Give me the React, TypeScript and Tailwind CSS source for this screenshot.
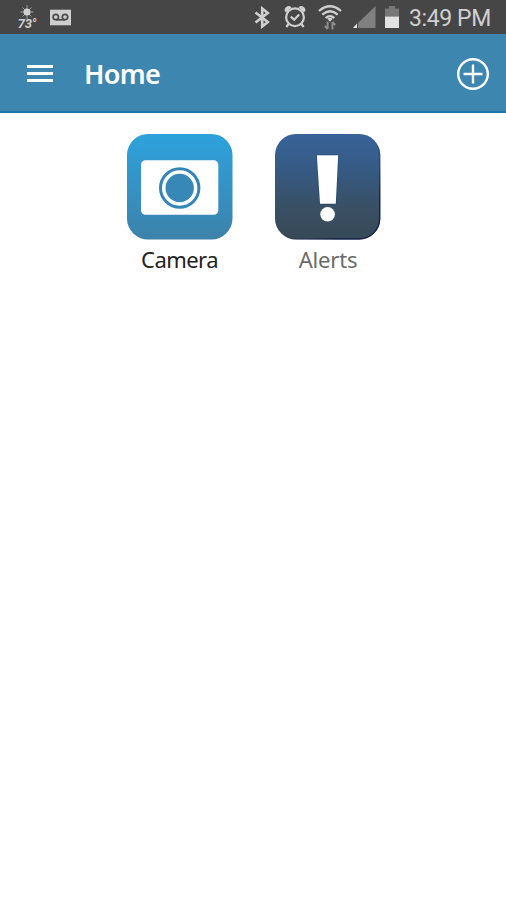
import type { ReactNode } from "react"

type tileProps = {
    label: string
    labelClass: string
    children: ReactNode
}

function Tile({ label, labelClass, children }: tileProps) {
    return (
        <button className="flex w-[106px] flex-col items-center">
            {children}
            <span className={`mt-[3px] whitespace-nowrap text-[22px] leading-[32px] ${labelClass}`}>{label}</span>
        </button>
    )
}

function CameraIcon() {
    return (
        <svg className="h-[106px] w-[106px]" viewBox="0 0 106 106">
            <defs>
                <linearGradient id="camera" x1="0" y1="0" x2="0" y2="1">
                    <stop offset="0" stopColor="#2da2dc" />
                    <stop offset="0.5" stopColor="#3592c5" />
                    <stop offset="1" stopColor="#3d82aa" />
                </linearGradient>
            </defs>
            <rect width="105.5" height="105.5" rx="21" fill="url(#camera)" />
            <rect x="14" y="26.3" width="77.3" height="54.5" rx="4.5" fill="#fff" />
            <circle cx="52.7" cy="54" r="19.2" fill="none" stroke="#3387b6" strokeWidth="3" />
            <circle cx="52.7" cy="54" r="14.2" fill="#3788b6" />
        </svg>
    )
}

function AlertsIcon() {
    return (
        <svg className="h-[106px] w-[106px]" viewBox="0 0 106 106">
            <defs>
                <linearGradient id="alerts" x1="0" y1="0" x2="0" y2="1">
                    <stop offset="0" stopColor="#386399" />
                    <stop offset="0.35" stopColor="#365a83" />
                    <stop offset="0.7" stopColor="#394f63" />
                    <stop offset="1" stopColor="#374956" />
                </linearGradient>
                <linearGradient id="edge" x1="0" y1="0" x2="1" y2="1">
                    <stop offset="0.5" stopColor="#14244e" stopOpacity="0" />
                    <stop offset="0.8" stopColor="#101e4c" />
                </linearGradient>
            </defs>
            <rect width="105.3" height="105.5" rx="21" fill="url(#alerts)" />
            <rect x="0.6" y="0.6" width="104.1" height="104.3" rx="20.4" fill="none" stroke="url(#edge)" strokeWidth="1.2" />
            <path d="M41.8 21.3H63.2L60.8 69.8H45Z" fill="#fff" stroke="#244a6c" strokeWidth="1.4" paintOrder="stroke" />
            <circle cx="52.6" cy="80.3" r="7.3" fill="#fff" />
        </svg>
    )
}

function StatusBar() {
    return (
        <div className="flex h-[34px] items-center bg-[#464646] text-[#d0d0d0]">
            <div className="ml-[17px] flex w-5 flex-col items-center">
                <svg className="h-[14px] w-4" viewBox="0 0 16 14" stroke="#a0a0a0" strokeWidth="1">
                    <path d="M8 0v14M1.5 7h13M3.5 2.5l9 9M12.5 2.5l-9 9" />
                    <circle cx="8" cy="7" r="3.5" fill="#cfcfcf" stroke="none" />
                </svg>
                <span className="-mt-px whitespace-nowrap font-[Roboto,sans-serif] text-[13px] font-bold italic leading-[11px] tracking-[-0.3px]">73°</span>
            </div>
            <svg className="ml-[13px] h-[17px] w-[21px]" viewBox="0 0 21 17">
                <rect y="0.7" width="21" height="15.6" fill="#cfcfcf" />
                <g fill="none" stroke="#4b4b4b" strokeWidth="1.7">
                    <circle cx="5.8" cy="8" r="2.7" />
                    <circle cx="15" cy="8" r="2.7" />
                    <path d="M5.8 10.8h9.2" />
                </g>
            </svg>
            <svg className="ml-[183px] h-[23px] w-4" viewBox="0 0 16 23" fill="none" stroke="#d0d0d0" strokeWidth="2.6">
                <path d="M1.5 6.5L13.8 16L8.2 20.5V2.5L13.8 7L1.5 16.5" />
            </svg>
            <svg className="ml-[13px] h-6 w-6" viewBox="0 0 24 24" fill="none" stroke="#d0d0d0" strokeWidth="2.2">
                <path d="M1.5 5.5Q2 0.8 6.5 1L8.5 2.3L3 7.5ZM22.5 5.5Q22 0.8 17.5 1L15.5 2.3L21 7.5Z" fill="#d0d0d0" stroke="none" />
                <circle cx="12" cy="12.3" r="8.9" />
                <path d="M7.8 11.6L11.2 14.8L16.2 9.6" />
                <path d="M5.5 19L3.4 22M18.5 19L20.6 22" />
            </svg>
            <svg className="ml-[11px] h-[25px] w-6" viewBox="0 0 24 25" fill="none" stroke="#d0d0d0" strokeWidth="2.3">
                <path d="M1 6Q12 -3.4 23 6M4.3 9.6Q12 3 19.7 9.6M7.6 13Q12 9.2 16.4 13" />
                <path d="M9.2 13.8Q12 11.6 14.8 13.8L12 16.8Z" fill="#d0d0d0" stroke="none" />
                <path d="M9.6 24V16.5M6.8 21l2.8 3M14.4 17v7.5M14.4 17l2.8 3" stroke="#8c8c8c" strokeWidth="2" />
            </svg>
            <svg className="ml-[11px] h-6 w-[23px]" viewBox="0 0 23 24">
                <path d="M22.5 1V23H5V18Z" fill="#808080" />
                <path d="M4 18.5V23H0Z" fill="#e8e8e8" />
            </svg>
            <svg className="ml-[9px] h-6 w-[14px]" viewBox="0 0 14 24">
                <path d="M0 3.5H4V1h6V3.5h4V11.5H0Z" fill="#777" />
                <path d="M0 11.5H14V23H0Z" fill="#e2e2e2" />
            </svg>
            <span className="ml-[10px] mt-[3px] whitespace-nowrap font-[Roboto,sans-serif] text-[23px] leading-[31px] tracking-[-0.4px]">3:49 PM</span>
        </div>
    )
}

function Header() {
    return (
        <header className="flex h-[79px] items-center border-b-2 border-[#1c76a7] bg-[#3d86b0] text-white">
            <button className="ml-[27px] mt-0.5 flex w-[26px] flex-col gap-[4px]">
                <span className="h-[3px] bg-white" />
                <span className="h-[3px] bg-white" />
                <span className="h-[3px] bg-white" />
            </button>
            <h1 className="ml-[31px] mt-0.5 text-[27px] font-semibold leading-9 tracking-[-0.7px]">Home</h1>
            <svg className="ml-auto mr-4 mt-0.5 h-[34px] w-[34px]" viewBox="0 0 34 34" fill="none" stroke="#fff" strokeWidth="2.4">
                <circle cx="17" cy="17" r="14.8" />
                <path d="M17 7.5v19M7.5 17h19" />
            </svg>
        </header>
    )
}

function App() {
    return (
        <div className="h-[900px] w-[506px] overflow-hidden bg-white font-['Noto_Sans',sans-serif]">
            <StatusBar />
            <Header />
            <main className="flex justify-center gap-[42px] pl-[2px] pt-[21px]">
                <Tile label="Camera" labelClass="-ml-px text-[#222] tracking-[-0.55px]">
                    <CameraIcon />
                </Tile>
                <Tile label="Alerts" labelClass="text-[#6a6a6a] tracking-[-0.2px]">
                    <AlertsIcon />
                </Tile>
            </main>
        </div>
    )
}

export default App
